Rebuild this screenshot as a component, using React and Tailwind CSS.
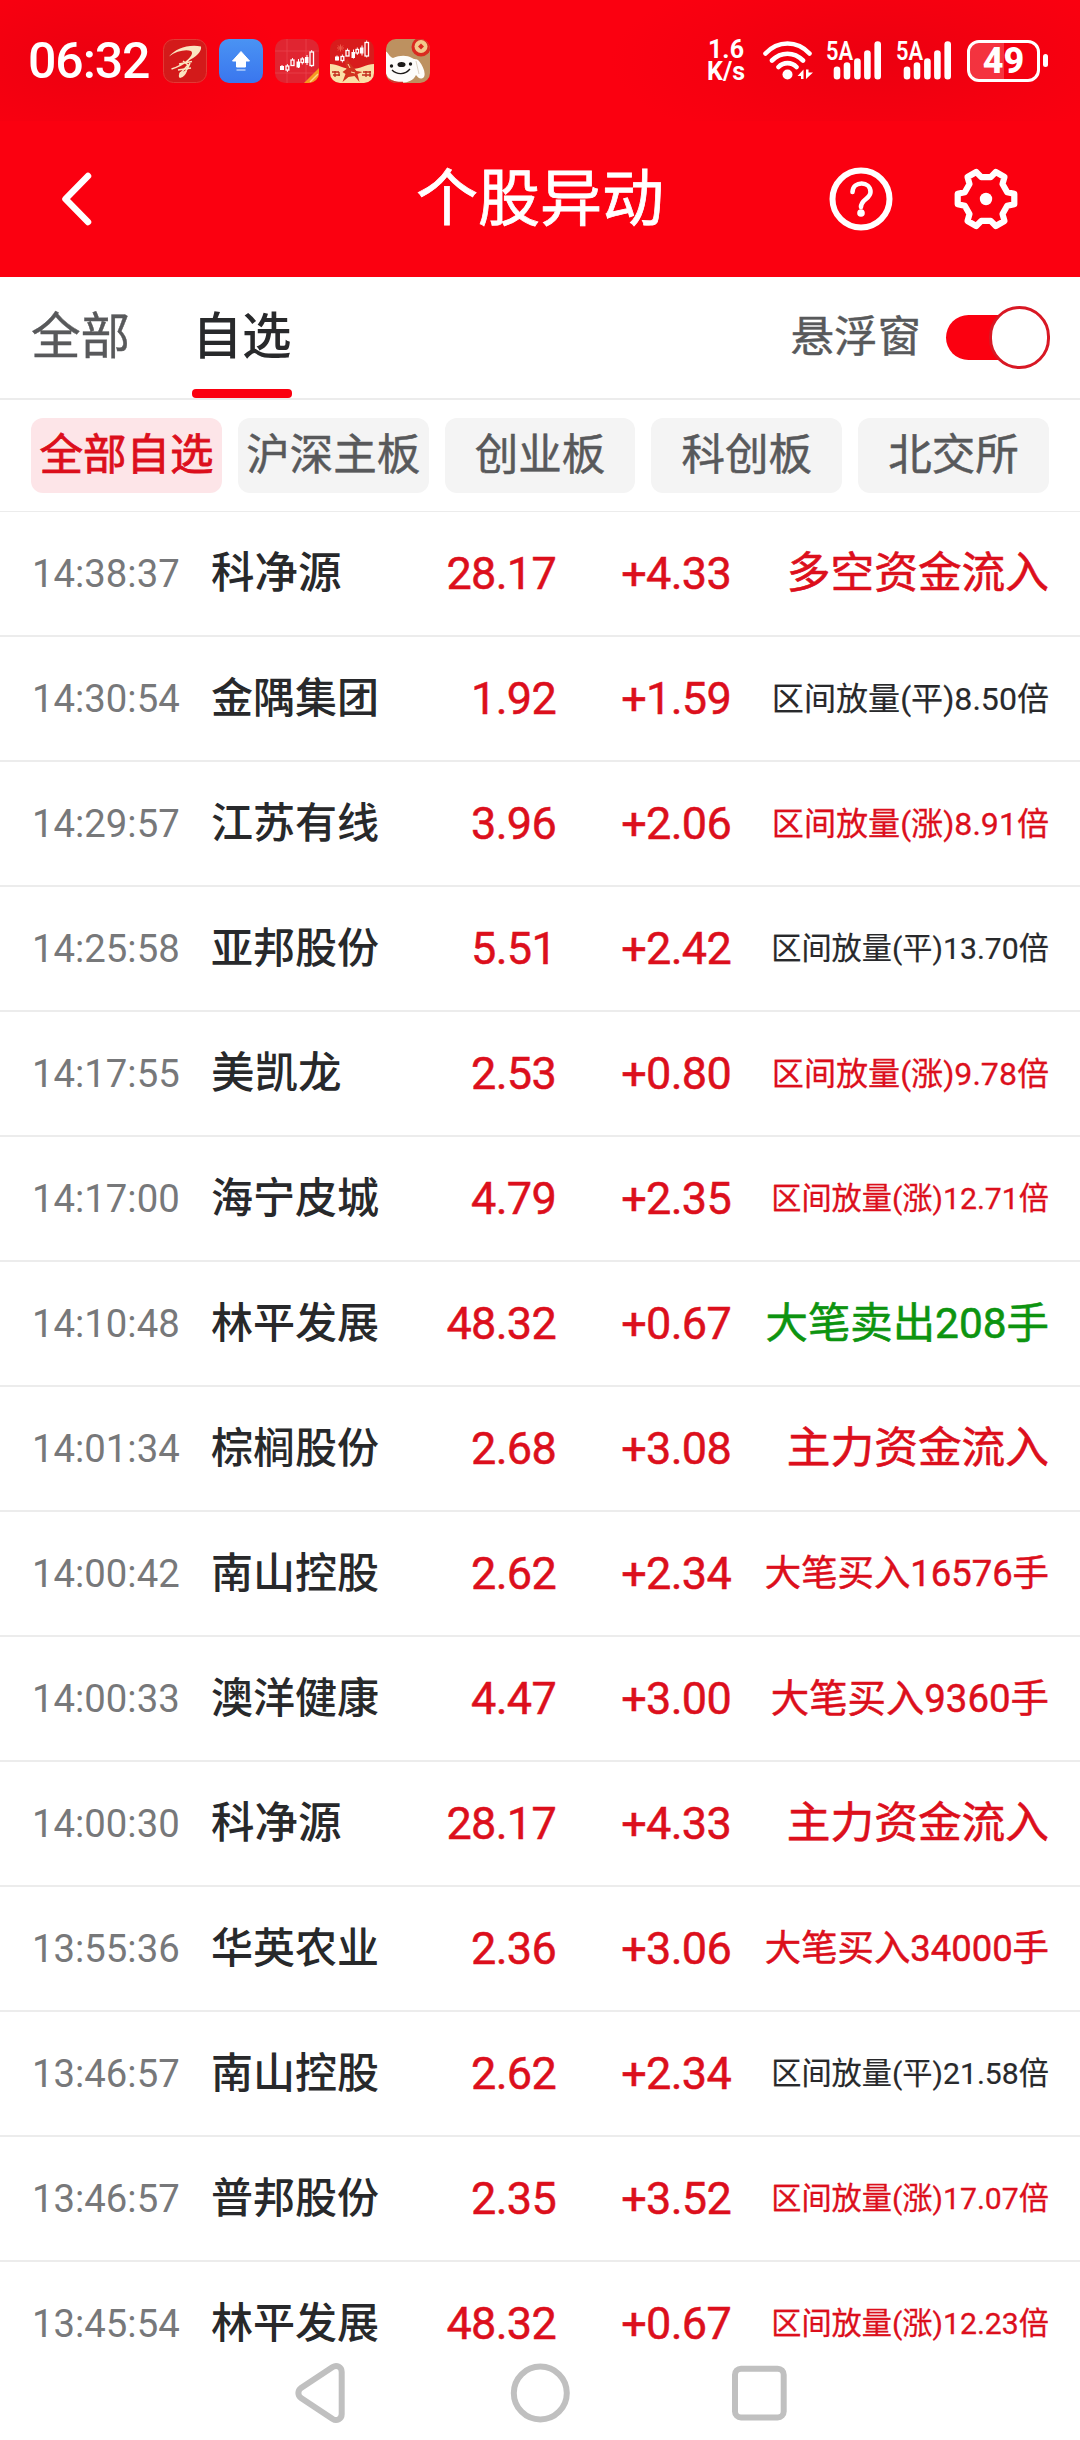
const RED = "text-[#dc0f1c]";
const DARK = "text-[#28292b]";
const GREEN = "text-[#0d9410]";

const rows = [
  ["14:38:37", "科净源", "28.17", "+4.33", "多空资金流入", "flow"],
  ["14:30:54", "金隅集团", "1.92", "+1.59", "区间放量(平)8.50倍", "flatShort"],
  ["14:29:57", "江苏有线", "3.96", "+2.06", "区间放量(涨)8.91倍", "upShort"],
  ["14:25:58", "亚邦股份", "5.51", "+2.42", "区间放量(平)13.70倍", "flatLong"],
  ["14:17:55", "美凯龙", "2.53", "+0.80", "区间放量(涨)9.78倍", "upShort"],
  ["14:17:00", "海宁皮城", "4.79", "+2.35", "区间放量(涨)12.71倍", "upLong"],
  ["14:10:48", "林平发展", "48.32", "+0.67", "大笔卖出208手", "sell"],
  ["14:01:34", "棕榈股份", "2.68", "+3.08", "主力资金流入", "flow"],
  ["14:00:42", "南山控股", "2.62", "+2.34", "大笔买入16576手", "buyLong"],
  ["14:00:33", "澳洋健康", "4.47", "+3.00", "大笔买入9360手", "buyShort"],
  ["14:00:30", "科净源", "28.17", "+4.33", "主力资金流入", "flow"],
  ["13:55:36", "华英农业", "2.36", "+3.06", "大笔买入34000手", "buyLong"],
  ["13:46:57", "南山控股", "2.62", "+2.34", "区间放量(平)21.58倍", "flatLong"],
  ["13:46:57", "普邦股份", "2.35", "+3.52", "区间放量(涨)17.07倍", "upLong"],
  ["13:45:54", "林平发展", "48.32", "+0.67", "区间放量(涨)12.23倍", "upLong"],
];

const kinds = {
  flow: `${RED} text-[43.7px] [-webkit-text-stroke:0.6px]`,
  sell: `${GREEN} text-[42.4px] [-webkit-text-stroke:0.6px]`,
  buyLong: `${RED} text-[36.4px] [-webkit-text-stroke:0.5px]`,
  buyShort: `${RED} text-[38.4px] [-webkit-text-stroke:0.5px]`,
  upShort: `${RED} text-[32.1px] [-webkit-text-stroke:0.3px]`,
  upLong: `${RED} text-[30.2px] [-webkit-text-stroke:0.3px]`,
  flatShort: `${DARK} text-[32.1px] [-webkit-text-stroke:0.2px]`,
  flatLong: `${DARK} text-[30.2px] [-webkit-text-stroke:0.2px]`,
};

function BrushIcon() {
  return (
    <svg viewBox="0 0 44 44" className="size-11">
      <rect x=".5" y=".5" width="43" height="43" rx="10" fill="#d31a1a" stroke="#e23a35" />
      <path d="M6 17.500C12 10 25 5 38 7.500 39 12 34 18 23 22.500c4-4 8-8 5-10.500-5-2-15 0-22 5.500Z" fill="#fbe6c0" />
      <path d="M8.500 30C15 28 22 24 27 20M16 25l13-2.500M15 31l13-2" fill="none" stroke="#fbe6c0" strokeWidth="1.500" />
      <path d="M20 22l5 4-8 9M27 24c-2 5-5 10-8 12" fill="none" stroke="#fbe6c0" strokeWidth="1.600" />
      <path d="M17 33c3-1 6-1 7-1-1 3-3 6-7 7-2-1-1-4 0-6Z" fill="#fbe6c0" />
    </svg>
  );
}

function UploadIcon() {
  return (
    <svg viewBox="0 0 44 44" className="size-11">
      <defs>
        <linearGradient id="up" x1="0" y1="0" x2="0" y2="1">
          <stop offset="0" stopColor="#4a93f3" />
          <stop offset="1" stopColor="#3a76ee" />
        </linearGradient>
      </defs>
      <rect width="44" height="44" rx="10" fill="url(#up)" />
      <path d="M22 12.500 30.500 22h-4v6h-9v-6h-4Z" fill="#fff" stroke="#fff" strokeLinejoin="round" />
      <path d="M17.500 31h9" stroke="#a9c8fa" strokeWidth="1.600" />
    </svg>
  );
}

function Candles() {
  return (
    <>
      <rect x="5" y="27" width="4" height="4" fill="#fff" />
      <rect x="21.500" y="22.500" width="3.500" height="6" fill="#fff" />
      <rect x="30" y="18" width="3.500" height="6" fill="#fff" />
      <path d="M7 26v5M23.500 20v9M32 16v10" stroke="#fff" strokeWidth="1" />
      <g fill="none" stroke="#fff" strokeWidth="1.300">
        <rect x="11" y="27" width="2.800" height="4" />
        <rect x="16" y="21" width="3" height="5.500" />
        <rect x="26" y="20" width="2.600" height="3.500" />
        <rect x="35" y="13" width="3.500" height="13.500" />
        <path d="M12.400 25v2M12.400 31v2M17.500 19v2M27.300 18v2M27.300 23.500v2M36.700 11v2M36.700 26.500v1.500" strokeWidth=".9" />
      </g>
    </>
  );
}

function StockIcon() {
  return (
    <svg viewBox="0 0 44 44" className="size-11">
      <defs>
        <clipPath id="sc"><rect width="44" height="44" rx="10" /></clipPath>
      </defs>
      <g clipPath="url(#sc)">
        <rect width="44" height="44" fill="#e02531" />
        <path d="M12 0v44M31 0v44M0 12h44M0 34h44" stroke="#ea4650" strokeWidth=".7" />
        <Candles />
        <path d="M29 44 44 29v15Z" fill="#f59a20" />
        <path d="m35 43 8-8" stroke="#fbd48a" strokeWidth="1.500" />
      </g>
    </svg>
  );
}

function HorseIcon() {
  return (
    <svg viewBox="0 0 44 44" className="size-11">
      <defs>
        <clipPath id="hc"><rect width="44" height="44" rx="10" /></clipPath>
      </defs>
      <g clipPath="url(#hc)">
        <rect width="44" height="44" fill="#d81c1c" />
        <path d="M0 25c7 0 14 5 22 5s15-5 22-5v19H0Z" fill="#fbdfa6" />
        <path d="M7 9h7M10.500 5.500v7M8 6.500l5 5M13 6.500l-5 5" stroke="#ee5a4a" strokeWidth="1" />
        <g transform="translate(0 -9.500)"><Candles /></g>
        <path d="m15 23 2.500-3 3 5 6 7 6 1-5 2 2 8-5-6-6 1-6 5 3-8-3-2 4-3Z" fill="#d3321f" />
        <path d="m18 25 2 4M21 33l4 1" stroke="#fbdfa6" strokeWidth="1" />
        <path d="M2 33h7M3 36h7M5 32v6M9 33v4M33 33h8M32 36h9M36 32v6M40 32v6" stroke="#c22a1c" strokeWidth="1.300" />
      </g>
    </svg>
  );
}

function DogIcon() {
  return (
    <svg viewBox="0 0 44 44" className="size-11">
      <defs>
        <clipPath id="dc"><rect width="44" height="44" rx="10" /></clipPath>
      </defs>
      <g clipPath="url(#dc)">
        <rect width="44" height="44" fill="#bd9160" />
        <path d="M-1 12c4 2 4 6 8 7 7-3 14-3 19 0 3 2 4 0 7 3 4 5 7 12 5 16-3 3-6 1-8-2-4 9-17 9-24 5-4-2-6-5-7-9Z" fill="#fdfcfa" />
        <path d="m30 22 3 13" stroke="#ddd2c4" strokeWidth="1" />
        <path d="M2 41c6 3 11 3 15 3" stroke="#d2302a" strokeWidth="2.500" fill="none" />
        <ellipse cx="15.500" cy="25.500" rx="4" ry="2.600" fill="#1d1a19" />
        <circle cx="5.500" cy="27" r="1.700" fill="#1d1a19" />
        <circle cx="24.500" cy="25" r="1.700" fill="#1d1a19" />
        <path d="M6 31c5 5 13 5 18-1" fill="none" stroke="#1d1a19" strokeWidth="1.300" />
        <circle cx="35" cy="8" r="9.500" fill="#d92a20" />
        <circle cx="35" cy="7.500" r="6.500" fill="#f2c98c" />
        <path d="m35 4.500 3 3-3 3-3-3Z" fill="#d92a20" />
      </g>
    </svg>
  );
}

function Wifi() {
  return (
    <svg viewBox="0 0 50 39" className="h-[39px] w-[50px]" fill="none" stroke="#fff" strokeLinecap="round" strokeWidth="4.600">
      <path d="M2.500 12.500C15-.8 34-.8 46.500 12.500M9 19.500c9-9 22-9 31 0M15.500 26c5-5.200 13-5.200 18 0" />
      <circle cx="24.500" cy="33.500" r="5" fill="#fff" stroke="none" />
      <path d="m34.500 35 6-6.500v9.500h-2.500v-3ZM43 28.500h2.500v3h4.500l-7 6.500Z" fill="#fff" stroke="none" />
    </svg>
  );
}

function Signal() {
  return (
    <div className="relative h-[39px] w-[55px]">
      <span className="absolute left-0 top-0 origin-left scale-x-[.84] font-[Roboto] text-[26px] font-semibold leading-[20px]">5A</span>
      <svg viewBox="0 0 55 39" className="absolute inset-0 size-full" stroke="#fff" strokeWidth="6.600" strokeLinecap="round">
        <path d="M11 28.900V35.300M21 24.500v10.800M31.400 20.500v14.800M41.400 12.500v22.800M51.700 3.500v31.800" />
      </svg>
    </div>
  );
}

function Battery() {
  return (
    <div className="flex items-center gap-[3px]">
      <div className="relative flex h-[42px] w-[73px] items-center justify-center overflow-hidden rounded-[12px] border-[3px] border-white">
        <div className="absolute inset-y-0 left-0 w-[34px] bg-white/20" />
        <span className="relative font-[Roboto] text-[36px] font-extrabold leading-none">49</span>
      </div>
      <div className="h-[13px] w-[5px] rounded-full bg-white" />
    </div>
  );
}

function StatusBar() {
  return (
    <div className="flex h-[121px] items-center bg-[radial-gradient(ellipse_190px_95px_at_90px_60px,#ec0010,transparent),radial-gradient(ellipse_270px_95px_at_880px_60px,#ec0010,transparent)] pl-[28px] pr-[32px]">
      <div className="w-[135px] font-[Roboto] text-[50px] font-medium leading-none tracking-[-1.100px]">06:32</div>
      <div className="flex gap-[11.800px]">
        <BrushIcon />
        <UploadIcon />
        <StockIcon />
        <HorseIcon />
        <DogIcon />
      </div>
      <div className="ml-auto flex items-center">
        <div className="mr-[16px] w-[42px] text-center font-[Roboto] text-[25px] font-bold leading-[22px]">
          <div>1.6</div>
          <div>K/s</div>
        </div>
        <div className="mr-[13px]"><Wifi /></div>
        <div className="mr-[15px]"><Signal /></div>
        <div className="mr-[16px]"><Signal /></div>
        <Battery />
      </div>
    </div>
  );
}

function TitleBar() {
  return (
    <div className="relative flex h-[156px] items-center justify-between pl-[60px] pr-[62px]">
      <svg viewBox="0 0 32 54" className="h-[54px] w-8" fill="none" stroke="#fff" strokeWidth="6.500" strokeLinecap="round" strokeLinejoin="round">
        <path d="M28 4 5.500 27 28 50" />
      </svg>
      <h1 className="absolute inset-x-0 top-[45px] text-center text-[62px] leading-[68px] [-webkit-text-stroke:0.8px]">个股异动</h1>
      <div className="flex gap-[61px]">
        <svg viewBox="0 0 64 64" className="size-16" fill="none" stroke="#fff" strokeLinecap="round">
          <circle cx="32" cy="32" r="28.500" strokeWidth="6" />
          <path d="M23.500 25c.5-11.500 18-11 18 0 0 7-9.500 7-9.500 15" strokeWidth="4.600" />
          <circle cx="32" cy="46" r="3.800" fill="#fff" stroke="none" />
        </svg>
        <svg viewBox="-32 -32 64 64" className="size-16" fill="none" stroke="#fff" strokeWidth="6.200" strokeLinejoin="round">
          <path d="M-4.700-21.800H4.700L9.800-27 18.500-22 16.500-15 21.200-6.800 28.300-5.200V5.200L21.200 6.800 16.500 15 18.500 22 9.800 27 4.700 21.800H-4.700L-9.800 27-18.500 22-16.500 15-21.200 6.800-28.300 5.200V-5.200L-21.200-6.800-16.500-15-18.500-22-9.800-27Z" />
          <circle r="6.200" fill="#fff" stroke="none" />
        </svg>
      </div>
    </div>
  );
}

function Tabs() {
  return (
    <div className="flex h-[123px] items-start justify-between border-b-2 border-[#ececec] pl-[31px] pr-[30px]">
      <div className="flex h-[121px] text-[49.500px]">
        <div className="w-[161px] pt-[28px] leading-[64px] text-[#58595b] [-webkit-text-stroke:0.4px]">全部</div>
        <div className="flex w-[100px] flex-col items-center justify-between pt-[28px] font-medium text-[#28292b]">
          <span className="leading-[64px]">自选</span>
          <div className="h-[9px] w-full rounded-[4px] bg-[#fb0010]" />
        </div>
      </div>
      <div className="flex h-[121px] items-center">
        <span className="mr-[25px] text-[43.500px] text-[#58595b] [-webkit-text-stroke:0.4px]">悬浮窗</span>
        <div className="relative h-[45px] w-[104px]">
          <div className="h-full w-[80px] rounded-full bg-[#fb0010]" />
          <div className="absolute -top-[9px] right-0 h-[63px] w-[61px] rounded-full border-[3px] border-[#d81824] bg-white" />
        </div>
      </div>
    </div>
  );
}

function Chips() {
  const chips = ["全部自选", "沪深主板", "创业板", "科创板", "北交所"];
  return (
    <div className="grid h-[112px] grid-cols-5 gap-4 border-b border-[#ececec] px-[31px] pt-[18px]">
      {chips.map((c, i) => (
        <div
          key={c}
          className={`flex h-[75px] items-center justify-center whitespace-nowrap rounded-[12px] text-[43.500px] leading-none ${
            i === 0
              ? "bg-[#fde5e8] text-[#dc0f1c] [-webkit-text-stroke:0.8px]"
              : "bg-[#f4f4f4] text-[#58595b] [-webkit-text-stroke:0.5px]"
          }`}
        >
          {c}
        </div>
      ))}
    </div>
  );
}

function Row({ row, last }) {
  const [time, name, price, change, event, kind] = row;
  return (
    <div className={`flex h-[125px] shrink-0 items-center whitespace-nowrap border-b-2 px-[31px] leading-none ${last ? "border-transparent" : "border-[#ececec]"}`}>
      <div className="w-[180px] pl-px pt-px text-[38.300px] text-[#77787a]">{time}</div>
      <div className={`w-[200px] pt-px font-medium text-[#28292b] ${name.length === 3 ? "text-[43.500px]" : "text-[42px]"}`}>{name}</div>
      <div className={`w-[145px] text-right text-[45px] tracking-[-0.700px] [-webkit-text-stroke:0.500px] ${RED}`}>{price}</div>
      <div className={`w-[175px] text-right text-[45px] tracking-[-0.700px] [-webkit-text-stroke:0.500px] ${RED}`}>{change}</div>
      <div className={`flex-1 pt-px text-right ${kinds[kind]}`}>{event}</div>
    </div>
  );
}

function NavBar() {
  return (
    <div className="flex h-[80px] items-center justify-center pb-[14px]">
      <svg viewBox="0 0 500 64" className="h-16 w-[500px]" fill="none" stroke="#c0c0c0" strokeWidth="6" strokeLinejoin="round">
        <path d="M51.700 11v42c0 5-5 7.500-9 5L11 37c-3.500-2.800-3.500-7.200 0-10L42.700 6c4-2.500 9 0 9 5Z" />
        <circle cx="250.300" cy="32" r="26.500" />
        <rect x="445" y="7.700" width="48.700" height="48.700" rx="6" />
      </svg>
    </div>
  );
}

export default function App() {
  return (
    <div className="flex h-[2440px] w-[1080px] flex-col overflow-hidden bg-white font-[Roboto,'Noto_Sans_CJK_SC',sans-serif]">
      <header className="h-[277px] shrink-0 bg-[#fb0010] text-white">
        <StatusBar />
        <TitleBar />
      </header>
      <Tabs />
      <Chips />
      <main className="flex h-[1848px] shrink-0 flex-col overflow-hidden">
        {rows.map((r, i) => (
          <Row key={i} row={r} last={i === rows.length - 1} />
        ))}
      </main>
      <NavBar />
    </div>
  );
}
